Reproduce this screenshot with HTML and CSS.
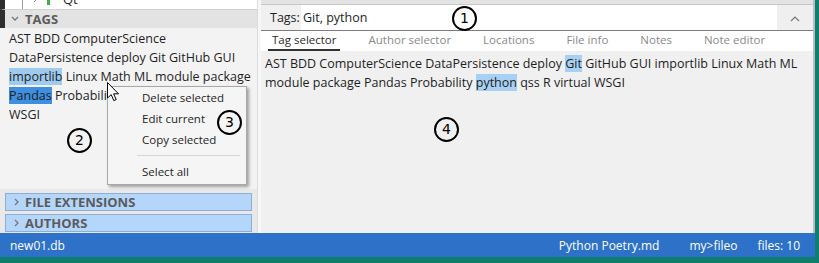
FILE: index.html
```html
<!DOCTYPE html>
<html lang="en">
<head>
    <meta charset="UTF-8">
    <title>fileo</title>
    <link rel="stylesheet" href="styles.css">
</head>
<body>

<div class="app">
    <div class="main">
        <aside class="side">
            <div class="tree">
                <div class="tree-row">
                    <span class="tree-line"></span>
                    <svg class="tree-arrow" width="6" height="8" viewBox="0 0 6 8"><polyline points="1,1 4,4 1,7" fill="none" stroke="#888" stroke-width="1"/></svg>
                    <span class="tree-icon"></span>
                    <span class="tree-text">Qt</span>
                </div>
            </div>
            <div class="section-head">
                <svg class="chev" width="8" height="6" viewBox="0 0 8 6"><polyline points="1,1 4,4 7,1" fill="none" stroke="#777" stroke-width="1.3"/></svg>
                TAGS
            </div>
            <div class="tag-list">
                AST BDD ComputerScience DataPersistence deploy Git GitHub GUI
                <span class="sel">importlib</span> Linux Math ML module package
                <span class="cur">Pandas</span> Probability python qss R virtual WSGI
            </div>
            <div class="section-bar">
                <svg class="chev" width="6" height="8" viewBox="0 0 6 8"><polyline points="1,1 4,4 1,7" fill="none" stroke="#777" stroke-width="1.3"/></svg>
                FILE EXTENSIONS
            </div>
            <div class="section-bar">
                <svg class="chev" width="6" height="8" viewBox="0 0 6 8"><polyline points="1,1 4,4 1,7" fill="none" stroke="#777" stroke-width="1.3"/></svg>
                AUTHORS
            </div>
        </aside>
        <div class="splitter"></div>
        <section class="content">
            <div class="top-gap"></div>
            <div class="filter-row">
                <label class="filter-label" for="tags">Tags:</label>
                <input class="filter-input" id="tags" type="text" value="Git, python">
                <button class="filter-btn">
                    <svg width="10" height="6" viewBox="0 0 10 6"><polyline points="1,5 5,1 9,5" fill="none" stroke="#777" stroke-width="1.2"/></svg>
                </button>
            </div>
            <nav class="tabs">
                <span class="tab active">Tag selector</span>
                <span class="tab">Author selector</span>
                <span class="tab">Locations</span>
                <span class="tab">File info</span>
                <span class="tab">Notes</span>
                <span class="tab">Note editor</span>
            </nav>
            <div class="tag-cloud">
                AST BDD ComputerScience DataPersistence deploy <span class="hit">Git</span> GitHub GUI importlib Linux Math ML
                module package Pandas Probability <span class="hit">python</span> qss R virtual WSGI
            </div>
        </section>
    </div>
    <footer class="status">
        <span class="status-db">new01.db</span>
        <span class="status-file">Python Poetry.md</span>
        <span class="status-path">my&gt;fileo</span>
        <span class="status-count">files: 10</span>
    </footer>
</div>

<div class="menu">
    <div class="menu-item">Delete selected</div>
    <div class="menu-item">Edit current</div>
    <div class="menu-item">Copy selected</div>
    <div class="menu-sep"></div>
    <div class="menu-item">Select all</div>
</div>

<svg class="cursor" width="13" height="20" viewBox="0 0 13 20">
    <path d="M0.5,0.5 L0.5,16 L4.2,12.6 L6.8,18.6 L9.2,17.6 L6.6,11.8 L11.5,11.8 Z" fill="#fff" stroke="#000" stroke-width="1"/>
</svg>

<div class="mark m1">1</div>
<div class="mark m2">2</div>
<div class="mark m3">3</div>
<div class="mark m4">4</div>

</body>
</html>
```

FILE: styles.css
```css
body {
    margin: 0;
    width: 819px;
    height: 263px;
    overflow: hidden;
    background-color: #0f7f6d;
    font-family: "Open Sans", "Noto Sans", sans-serif;
    font-size: 12.5px;
    color: #1e1e1e;
    position: relative;
}
.app {
    width: 815px;
    height: 257px;
    display: flex;
    flex-direction: column;
}
.main {
    height: 233px;
    display: flex;
}

/* left panel */
.side {
    width: 257px;
    background-color: #e9e9e9;
    display: flex;
    flex-direction: column;
}
.tree {
    height: 9px;
    background-color: #fff;
    border-left: 5px solid #2e2e2e;
    border-bottom: 1px solid #d2d2d2;
    overflow: hidden;
}
.tree-row {
    display: flex;
    align-items: center;
    height: 20px;
    margin-top: -11px;
}
.tree-line {
    width: 1px;
    height: 20px;
    background-color: #a0a0a0;
    margin-left: 17px;
}
.tree-arrow {
    margin-left: 10px;
}
.tree-icon {
    width: 3px;
    height: 12px;
    background-color: #3fae4b;
    margin-left: 8px;
}
.tree-text {
    margin-left: 13px;
    font-size: 13px;
}
.section-head {
    height: 18px;
    background-color: #e3e3e3;
    border-left: 5px solid #2e2e2e;
    display: flex;
    align-items: center;
    font-weight: bold;
    font-size: 13px;
    color: #5b5b5b;
}
.section-head .chev {
    margin: 0 6px 0 6px;
}
.tag-list {
    height: 157px;
    background-color: #f3f3f3;
    padding: 1px 2px 3px 9px;
    line-height: 19px;
}
.sel {
    background-color: #9fcbf0;
}
.cur {
    background-color: #3e8fe0;
}
.section-bar {
    height: 16px;
    margin: 4px 5px 0;
    background-color: #b4d6fb;
    border: 1px solid #90aed4;
    display: flex;
    align-items: center;
    font-weight: bold;
    font-size: 13px;
    color: #5b5b5b;
}
.section-bar + .section-bar {
    margin-top: 3px;
}
.section-bar .chev {
    margin: 0 5px 0 8px;
}
.splitter {
    width: 3px;
    background-color: #f7f7f7;
    border-left: 1px solid #dcdcdc;
}

/* right panel */
.content {
    flex: 1;
    background-color: #f0f0f0;
    border-right: 2px solid #bcbcbc;
    display: flex;
    flex-direction: column;
}
.top-gap {
    height: 4px;
    background-color: #e3e3e3;
    border-bottom: 1px solid #c6c6c6;
}
.filter-row {
    height: 25px;
    display: flex;
    border-bottom: 1px solid #7d7d7d;
}
.filter-label {
    width: 31px;
    padding-left: 9px;
    line-height: 25px;
    background-color: #f0f0f0;
}
.filter-input {
    flex: 1;
    border: none;
    background-color: #fff;
    font-family: inherit;
    font-size: 12.5px;
    color: #1e1e1e;
    padding: 0 2px;
    outline: none;
}
.filter-btn {
    width: 36px;
    border: none;
    background-color: #efefef;
    padding: 0;
}
.tabs {
    height: 20px;
    background-color: #fff;
    display: flex;
    gap: 24px;
    padding-left: 7px;
    font-size: 11.5px;
    white-space: nowrap;
}
.tab {
    padding: 0 4px;
    line-height: 18px;
    color: #8a8a8a;
}
.tab.active {
    color: #2a2a2a;
    border-bottom: 2px solid #333;
}
.tag-cloud {
    flex: 1;
    padding: 3px 5px 0 4px;
    line-height: 19px;
}
.hit {
    background-color: #a8d0f4;
}

/* status bar */
.status {
    height: 24px;
    background-color: #2d72c8;
    color: #fff;
    font-size: 12px;
    display: flex;
    align-items: center;
    padding-left: 10px;
    white-space: nowrap;
}
.status-db {
    flex: 1;
}
.status-file {
    margin-right: 30px;
}
.status-path {
    margin-right: 20px;
}
.status-count {
    margin-right: 15px;
}

/* context menu */
.menu {
    position: absolute;
    left: 107px;
    top: 86px;
    width: 138px;
    padding: 0 0 2px;
    background-color: #f5f5f5;
    border: 1px solid #a8a8a8;
    box-shadow: 2px 2px 3px rgba(0, 0, 0, 0.35);
    font-size: 11.5px;
}
.menu-item {
    line-height: 21px;
    padding-left: 34px;
}
.menu-sep {
    height: 1px;
    background-color: #d6d6d6;
    margin: 5px 6px 5px 29px;
}
.cursor {
    position: absolute;
    left: 107px;
    top: 82px;
}

/* annotation markers */
.mark {
    position: absolute;
    width: 21px;
    height: 21px;
    border: 2px solid #000;
    border-radius: 50%;
    text-align: center;
    line-height: 21px;
    font-size: 14px;
    color: #000;
    font-family: "DejaVu Sans", sans-serif;
}
.m1 { left: 452px; top: 6px; background-color: #fff; }
.m2 { left: 67px; top: 128px; }
.m3 { left: 217px; top: 110px; background-color: #f5f5f5; }
.m4 { left: 434px; top: 117px; }
```
